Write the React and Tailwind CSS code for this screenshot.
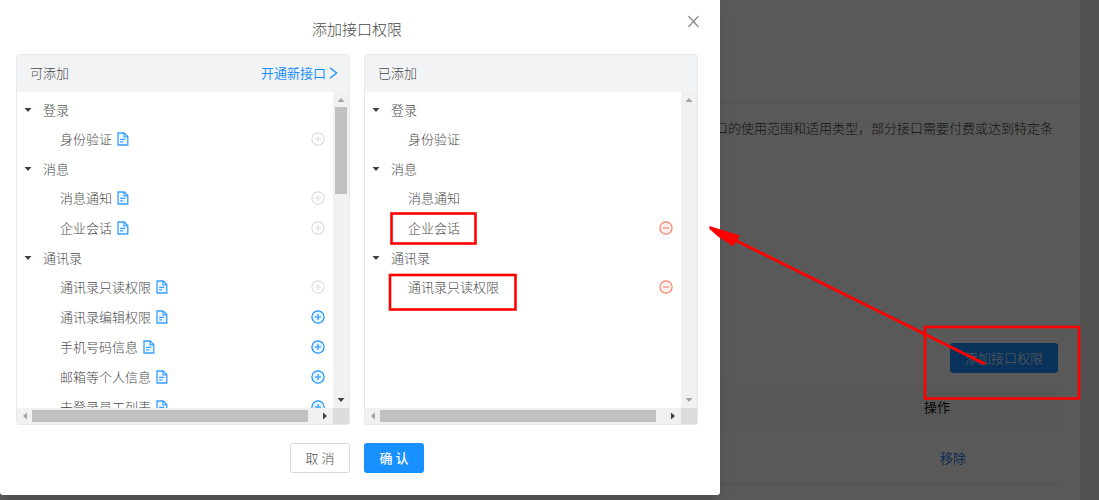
import { useState } from 'react';

const availableGroups = [
    {
        name: '登录',
        items: [{ name: '身份验证', added: true }],
    },
    {
        name: '消息',
        items: [
            { name: '消息通知', added: true },
            { name: '企业会话', added: true },
        ],
    },
    {
        name: '通讯录',
        items: [
            { name: '通讯录只读权限', added: true },
            { name: '通讯录编辑权限', added: false },
            { name: '手机号码信息', added: false },
            { name: '邮箱等个人信息', added: false },
            { name: '未登录员工列表', added: false },
        ],
    },
];

const addedGroups = [
    { name: '登录', items: [{ name: '身份验证' }] },
    { name: '消息', items: [{ name: '消息通知' }, { name: '企业会话', removable: true }] },
    { name: '通讯录', items: [{ name: '通讯录只读权限', removable: true }] },
];

function FileIcon() {
    return (
        <svg className="w-[12px] h-[14px]" viewBox="0 0 12 14" fill="none" stroke="#3a9fff" aria-hidden="true">
            <path d="M1 1h6.2l3.6 3.6V13H1z" fill="#eef7ff" strokeWidth="1.3" />
            <path d="M7 1v3.8h3.8M3.2 7.4h5M3.2 9.8h3" strokeWidth="1.2" />
        </svg>
    );
}

function CircleIcon({ plus, fill }) {
    return (
        <svg className="w-[14px] h-[14px]" viewBox="0 0 14 14" fill="none" stroke="currentColor" aria-hidden="true">
            <circle cx="7" cy="7" r="6.1" fill={fill} strokeWidth="1.2" />
            <path d={plus ? 'M4 7h6M7 4v6' : 'M4 7h6'} strokeWidth="1.5" strokeOpacity=".75" />
        </svg>
    );
}

function Arrow({ d, dark }) {
    return (
        <svg className="w-[8px] h-[8px]" viewBox="0 0 8 8" fill={dark ? '#404040' : '#a3a3a3'} aria-hidden="true">
            <path d={d} />
        </svg>
    );
}

const UP = 'M0.5 6L4 2l3.5 4z';
const DOWN = 'M0.5 2h7L4 6z';
const LEFT = 'M6 0.5v7L2 4z';
const RIGHT = 'M2 0.5v7L6 4z';

// Title bar, tree area and the two scrollbars of one side of the transfer
function Panel({ title, extra, canScroll, children }) {
    return (
        <section className="min-w-0 border border-[#e6e8ea] rounded-[3px] overflow-hidden">
            <header className="h-[37px] pb-[2px] pl-[13px] pr-[11px] flex items-center justify-between bg-[#f2f3f5]">
                <h3>{title}</h3>
                {extra}
            </header>
            <div className="h-[316px] flex">
                <ul className="flex-1 min-w-0 pt-[3px] overflow-hidden">{children}</ul>
                <div className="w-[16px] px-[2px] flex flex-col items-center bg-[#f1f1f1]">
                    <div className="h-[15px] flex items-center"><Arrow d={UP} /></div>
                    <div className="flex-1 w-full">
                        {canScroll && <div className="h-[87px] bg-[#c1c1c1]"></div>}
                    </div>
                    <div className="h-[16px] flex items-center"><Arrow d={DOWN} dark={canScroll} /></div>
                </div>
            </div>
            <div className="h-[16px] flex bg-[#f1f1f1]">
                <div className="w-[15px] flex items-center justify-center"><Arrow d={LEFT} /></div>
                <div className="flex-1 py-[2px] pr-[9px]">
                    <div className="h-full bg-[#c1c1c1]"></div>
                </div>
                <div className="w-[16px] flex items-center justify-center"><Arrow d={RIGHT} dark /></div>
                <div className="w-[16px] bg-[#dcdcdc]"></div>
            </div>
        </section>
    );
}

function Group({ name, children }) {
    const [open, setOpen] = useState(true);

    return (
        <li>
            <button
                type="button"
                aria-expanded={open}
                onClick={() => setOpen(!open)}
                className="w-full h-[29px] pl-[7px] flex items-center gap-[11px] text-left"
            >
                <Arrow d={open ? DOWN : RIGHT} dark />
                {name}
            </button>
            {open && <ul>{children}</ul>}
        </li>
    );
}

function Item({ name, children, action }) {
    return (
        <li className="h-[30px] pl-[43px] pr-[8px] flex items-center">
            <span>{name}</span>
            {children}
            <span className="ml-auto flex">{action}</span>
        </li>
    );
}

function PermissionDialog() {
    return (
        <div
            role="dialog"
            aria-labelledby="dialog-title"
            className="absolute top-0 left-0 w-[720px] pt-[18px] pb-[22px] pl-[16px] pr-[22px] bg-white rounded-b-[3px] shadow-lg text-[#4a4a4a]"
        >
            <h2 id="dialog-title" className="mb-[14px] text-center text-[15px] leading-[22px]">添加接口权限</h2>
            <button type="button" aria-label="关闭" className="absolute top-[15px] right-[20px] text-[#8a8a8a]">
                <svg className="w-[13px] h-[13px]" viewBox="0 0 13 13" fill="none" stroke="currentColor" strokeWidth="1.2">
                    <path d="M1.5 1l10 11M11.5 1l-10 11" />
                </svg>
            </button>

            <div className="grid grid-cols-2 gap-[14px]">
                <Panel
                    title="可添加"
                    canScroll
                    extra={
                        <a href="#open" className="flex items-center gap-[3px] font-normal text-[#1890ff]">
                            开通新接口
                            <svg className="w-[9px] h-[12px]" viewBox="0 0 9 12" fill="none" stroke="currentColor" strokeWidth="1.3">
                                <path d="M1 .8l6.6 5.2L1 11.2" />
                            </svg>
                        </a>
                    }
                >
                    {availableGroups.map((group) => (
                        <Group key={group.name} name={group.name}>
                            {group.items.map((item) => (
                                <Item
                                    key={item.name}
                                    name={item.name}
                                    action={
                                        <button
                                            type="button"
                                            aria-label={`添加${item.name}`}
                                            disabled={item.added}
                                            className="text-[#1890ff] disabled:text-[#dcdcdc]"
                                        >
                                            <CircleIcon plus fill={item.added ? '#fff' : '#e6f7ff'} />
                                        </button>
                                    }
                                >
                                    <a href="#doc" aria-label={`${item.name}文档`} className="ml-[5px]">
                                        <FileIcon />
                                    </a>
                                </Item>
                            ))}
                        </Group>
                    ))}
                </Panel>

                <Panel title="已添加">
                    {addedGroups.map((group) => (
                        <Group key={group.name} name={group.name}>
                            {group.items.map((item) => (
                                <Item
                                    key={item.name}
                                    name={item.name}
                                    action={item.removable && (
                                        <button type="button" aria-label={`移除${item.name}`} className="text-[#fa7c66]">
                                            <CircleIcon fill="#fff2ee" />
                                        </button>
                                    )}
                                />
                            ))}
                        </Group>
                    ))}
                </Panel>
            </div>

            <div className="mt-[18px] flex justify-center gap-[14px]">
                <button type="button" className="w-[60px] h-[30px] border border-[#d9d9d9] rounded-[3px]">取 消</button>
                <button type="button" className="w-[60px] h-[30px] rounded-[3px] bg-[#1890ff] font-medium text-white">确 认</button>
            </div>
        </div>
    );
}

// Red boxes and the arrow drawn over the page
function Annotations() {
    return (
        <svg className="absolute top-0 left-0 w-[1099px] h-[500px] pointer-events-none" viewBox="0 0 1099 500" fill="none" stroke="#f00" aria-hidden="true">
            <rect x="391.5" y="213.5" width="84" height="30" strokeWidth="2.6" />
            <rect x="390" y="275" width="125.5" height="34.5" strokeWidth="2.6" />
            <rect x="925" y="327" width="154" height="71.5" strokeWidth="2.6" />
            <path d="M736 240.5L985 364" strokeWidth="3" />
            <path d="M710 227L739 236L733 245.5L719 236.5L710 228.5z" fill="#f00" strokeWidth="1.4" strokeLinejoin="round" />
        </svg>
    );
}

export default function App() {
    return (
        <div className="relative min-h-screen pr-[19px] flex overflow-hidden bg-[#e8e8e8] font-['Noto_Sans_CJK_SC',sans-serif] font-light text-[13px] leading-[20px]">
            <main className="flex-1 bg-white text-[#333]">
                <div className="h-[103px] border-b border-[#e8e8e8]"></div>
                <div className="pt-[15px] pr-[22px]">
                    <p className="pr-[5px] text-right whitespace-nowrap">
                        口的使用范围和适用类型，部分接口需要付费或达到特定条
                    </p>
                    <div className="mt-[205px] flex justify-end">
                        <button type="button" className="h-[30px] px-[15px] rounded-[3px] bg-[#1890ff] text-white">
                            添加接口权限
                        </button>
                    </div>
                    <table className="w-full mt-[9px] text-left">
                        <thead>
                            <tr className="h-[50px] bg-[#fafafa]">
                                <th className="w-auto"></th>
                                <th className="w-[150px] pl-[16px] font-normal text-[#111]">操作</th>
                            </tr>
                        </thead>
                        <tbody>
                            <tr className="h-[52px] border-b border-[#e8e8e8]">
                                <td></td>
                                <td className="pl-[32px]">
                                    <a href="#remove" className="font-normal text-[#2f7fe6]">移除</a>
                                </td>
                            </tr>
                        </tbody>
                    </table>
                </div>
            </main>
            <div className="absolute inset-0 bg-black/65"></div>
            <PermissionDialog />
            <Annotations />
        </div>
    );
}
